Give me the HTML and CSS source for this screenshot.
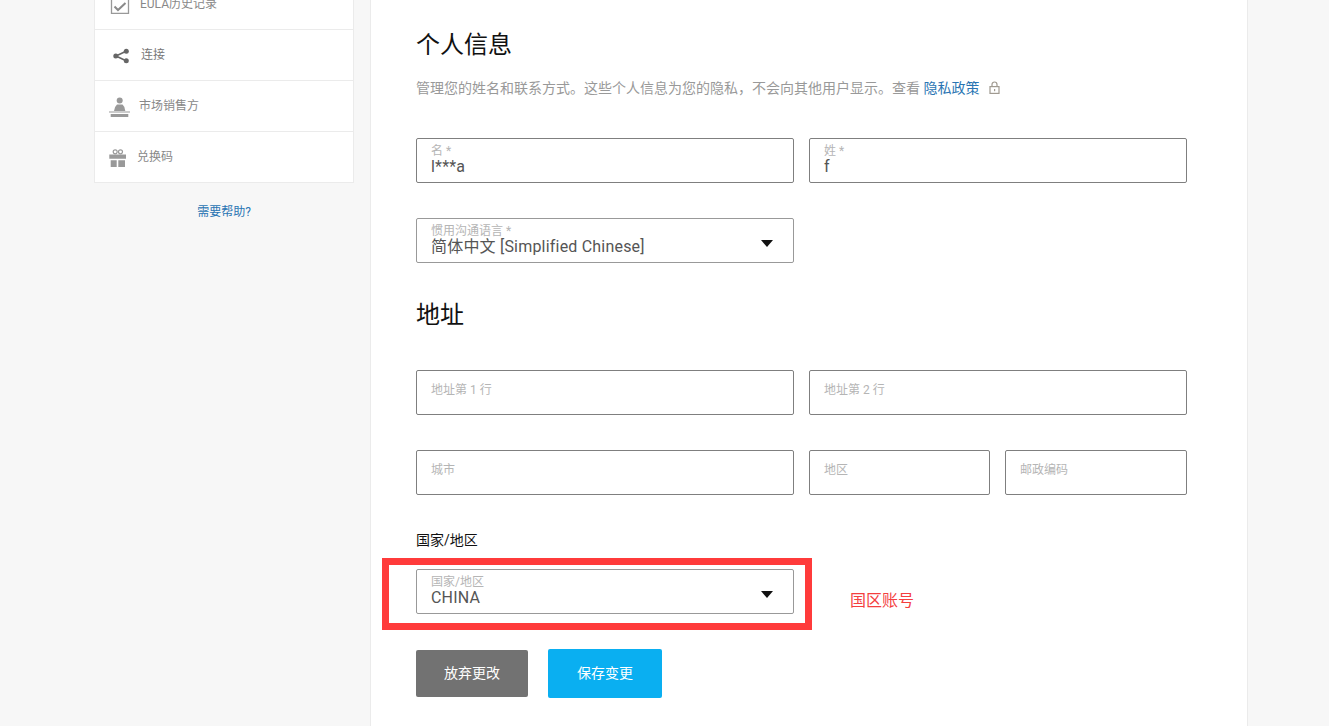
FILE: index.html
```html
<!DOCTYPE html>
<html lang="zh-CN">
<head>
    <meta charset="UTF-8">
    <title>个人信息</title>
    <link rel="stylesheet" href="styles.css">
</head>
<body>
    <div class="page">
        <aside class="side">
            <ul class="menu">
                <li class="menu-item">
                    <svg class="ico ico-eula" width="20" height="20" viewBox="0 0 20 20"><path d="M1.500 0v19.300h17V0" fill="none" stroke="#999" stroke-width="1.300"/><path d="M4.500 12.500l3.500 3.500L15.500 9" fill="none" stroke="#8a8a8a" stroke-width="2"/></svg>
                    <span class="menu-text">EULA历史记录</span>
                </li>
                <li class="menu-item">
                    <svg class="ico ico-share" width="18" height="18" viewBox="0 0 18 18"><path d="M14 4.300L4 9l10 4.700" fill="none" stroke="#666" stroke-width="1.600"/><circle cx="14.300" cy="4.300" r="2.500" fill="#666"/><circle cx="3.800" cy="9" r="2.500" fill="#666"/><circle cx="14.300" cy="13.700" r="2.500" fill="#666"/></svg>
                    <span class="menu-text menu-text-link">连接</span>
                </li>
                <li class="menu-item">
                    <svg class="ico ico-seller" width="22" height="22" viewBox="0 0 22 22"><circle cx="10.700" cy="5.500" r="3" fill="#999"/><path d="M5 16Q5.500 11.500 8 9.500h5.500Q16 11.500 16.300 16z" fill="#999"/><path d="M0 16.500h21v1H0z" fill="#999"/><path d="M1.700 19h17.600v3H1.700z" fill="#999"/></svg>
                    <span class="menu-text">市场销售方</span>
                </li>
                <li class="menu-item">
                    <svg class="ico ico-gift" width="18" height="18" viewBox="0 0 18 18"><circle cx="6.200" cy="2.800" r="2" fill="none" stroke="#999" stroke-width="1.200"/><circle cx="11.500" cy="2.800" r="2" fill="none" stroke="#999" stroke-width="1.200"/><path d="M.3 5.500H17v4.300H.3zM1.700 11.300h6V18h-6zM9.300 11.300H16V18H9.300z" fill="#999"/></svg>
                    <span class="menu-text">兑换码</span>
                </li>
            </ul>
            <a class="help" href="#">需要帮助?</a>
        </aside>

        <main class="panel">
            <h1 class="title">个人信息</h1>
            <p class="desc">管理您的姓名和联系方式。这些个人信息为您的隐私，不会向其他用户显示。查看 <a href="#">隐私政策</a>
                <svg class="lock" width="11" height="13" viewBox="0 0 11 13"><path d="M3 6V3.500a2.500 2.500 0 0 1 5 0V6" fill="none" stroke="#a09a90" stroke-width="1.200"/><rect x="1" y="5.600" width="9" height="6.800" fill="none" stroke="#a09a90" stroke-width="1.200"/><rect x="5" y="8" width="1.200" height="2.200" fill="#a09a90"/></svg>
            </p>

            <div class="row row-first">
                <div class="field"><label>名 *</label><span class="val">l***a</span></div>
                <div class="field"><label>姓 *</label><span class="val">f</span></div>
            </div>
            <div class="row row-lang">
                <div class="field select"><label>惯用沟通语言 *</label><span class="val">简体中文 [Simplified Chinese]</span><i class="caret"></i></div>
            </div>

            <h2 class="title title-addr">地址</h2>

            <div class="row row-addr">
                <div class="field empty"><label>地址第 1 行</label></div>
                <div class="field empty"><label>地址第 2 行</label></div>
            </div>
            <div class="row row-city">
                <div class="field empty"><label>城市</label></div>
                <div class="split">
                    <div class="field empty"><label>地区</label></div>
                    <div class="field empty"><label>邮政编码</label></div>
                </div>
            </div>

            <div class="country-label">国家/地区</div>
            <div class="row row-country">
                <div class="field select"><label>国家/地区</label><span class="val">CHINA</span><i class="caret"></i></div>
                <!-- annotation on top of the screenshot -->
                <div class="mark"></div>
                <span class="mark-text">国区账号</span>
            </div>

            <div class="buttons">
                <button class="btn btn-grey">放弃更改</button>
                <button class="btn btn-blue">保存变更</button>
            </div>
        </main>
    </div>
</body>
</html>
```

FILE: styles.css
```css
html, body {margin: 0; padding: 0; height: 100%; overflow: hidden;}
body {
    background: #f7f7f7;
    font-family: Roboto, "Noto Sans CJK SC", sans-serif;
    color: #555;
}
.page {display: flex; align-items: flex-start; height: 726px; padding-left: 94px; gap: 16px; overflow: hidden;}

.side {width: 260px; flex: none; margin-top: -21px;}
.menu {list-style: none; margin: 0; padding: 0; background: #fff; border: 1px solid #ebebeb; border-top: 0;}
.menu-item {display: flex; align-items: center; height: 50px; border-bottom: 1px solid #ebebeb; position: relative; font-size: 12px; color: #888;}
.menu-item:last-child {border-bottom: 0;}
.menu-text {line-height: 16px; white-space: nowrap;}
.menu-text-link {color: #777;}
.ico {flex: none;}
.ico-eula {margin: 0 10px 0 15px;}
.ico-share {margin: 2px 11px 0 17px;}
.ico-seller {margin: 0 8px 0 14px;}
.ico-gift {margin: 2px 10px 0 14px;}
.help {display: block; margin-top: 21px; text-align: center; font-size: 12px; line-height: 16px; color: #2a75b3; text-decoration: none;}

.panel {
    width: 831px; flex: none; height: 726px; padding-left: 45px;
    background: #fff;
    border-left: 1px solid #ebebeb; border-right: 1px solid #ebebeb;
}
.title {margin: 0; padding-top: 27px; font-size: 24px; font-weight: 400; line-height: 36px; color: #111;}
.desc {margin: 0; padding-top: 15px; font-size: 14px; line-height: 20px; color: #999;}
.desc a {color: #2a75b3; text-decoration: none;}
.lock {margin-left: 6px; vertical-align: -1px;}

.row {display: flex; gap: 15px; width: 771px;}
.row-first {margin-top: 40px;}
.row-lang {margin-top: 35px;}
.title-addr {padding-top: 34px;}
.row-addr {margin-top: 37px;}
.row-city {margin-top: 35px;}
.row-country {position: relative; margin-top: 19px;}

.field {
    box-sizing: border-box; position: relative; width: 378px; height: 45px; flex: none;
    padding: 5px 14px 0;
    border: 1px solid #7f7f7f; border-radius: 2px;
    display: flex; flex-direction: column;
}
.field label {font-size: 12px; line-height: 14px; color: #b5b5b5;}
.field .val {font-size: 16px; line-height: 18px; letter-spacing: .2px; color: #555;}
.field.empty label {padding-top: 7px;}
.select {border-color: #999;}
.caret {
    position: absolute; right: 20px; top: 21px; width: 0; height: 0;
    border-left: 6px solid transparent; border-right: 6px solid transparent; border-top: 7px solid #111;
}
.split {display: flex; gap: 15px;}
.split .field {width: 181px;}
.split .field + .field {width: 182px;}

.country-label {margin-top: 35px; font-size: 14px; line-height: 20px; color: #111;}

.mark {position: absolute; left: -34px; top: -11px; width: 430px; height: 72px; box-sizing: border-box; border: 7px solid #ff3b3b;}
.mark-text {position: absolute; left: 434px; top: 22px; font-size: 16px; line-height: 20px; color: #f43f3f;}

.buttons {display: flex; align-items: center; gap: 20px; margin-top: 35px;}
.btn {border: 0; border-radius: 2px; font-family: inherit; font-size: 14px; color: #fff; padding: 0 0 3px;}
.btn-grey {width: 112px; height: 47px; background: #727272;}
.btn-blue {width: 114px; height: 49px; background: #0aaff1;}
```
